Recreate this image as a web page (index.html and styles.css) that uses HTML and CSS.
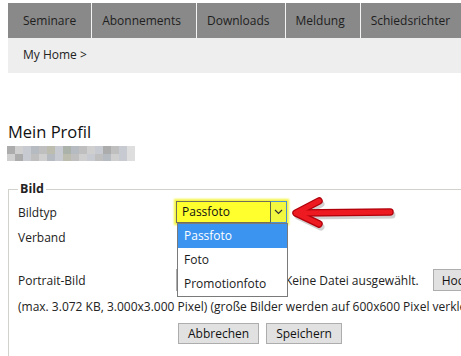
FILE: index.html
```html
<!DOCTYPE html>
<html>
<head>
	<title>Mein Profil</title>
	<link rel="stylesheet" href="styles.css">
</head>
<body>
	<div class="page">
		<nav class="tabs">
			<a class="tab first">Seminare</a>
			<a class="tab">Abonnements</a>
			<a class="tab">Downloads</a>
			<a class="tab">Meldung</a>
			<a class="tab">Schiedsrichter</a>
		</nav>
		<div class="crumbs">My Home &gt;</div>

		<div class="content">
			<h1>Mein Profil</h1>
			<div class="blur">
				<span class="s1"></span><span class="s3"></span><span class="s4"></span><span class="s5"></span><span class="s2"></span><span class="s6"></span><span class="s4"></span><span class="s7"></span><span class="s5"></span><span class="s2"></span><span class="s3"></span><span class="s4"></span><span class="s1"></span><span class="s2"></span><span class="s4"></span><span class="s0"></span>
				<span class="s3"></span><span class="s1"></span><span class="s4"></span><span class="s2"></span><span class="s3"></span><span class="s5"></span><span class="s4"></span><span class="s6"></span><span class="s2"></span><span class="s3"></span><span class="s4"></span><span class="s2"></span><span class="s5"></span><span class="s3"></span><span class="s4"></span><span class="s0"></span>
			</div>

			<fieldset class="box">
				<legend>Bild</legend>
				<div class="row">
					<label class="lbl">Bildtyp</label>
					<div class="select-wrap">
						<div class="select">
							<span class="value">Passfoto</span>
							<span class="caret">
								<svg width="9" height="6" viewBox="0 0 9 6"><path d="M1 1 L4.5 4.5 L8 1" fill="none" stroke="#333" stroke-width="1.2"/></svg>
							</span>
						</div>
						<ul class="options">
							<li class="active">Passfoto</li>
							<li>Foto</li>
							<li>Promotionfoto</li>
						</ul>
					</div>
				</div>
				<div class="row">
					<label class="lbl">Verband</label>
				</div>
				<div class="row file-row">
					<label class="lbl">Portrait-Bild</label>
					<div class="file">
						<button class="btn browse">Durchsuchen...</button>
						<span class="nofile">Keine Datei ausgewählt.</span>
						<button class="btn">Hochladen</button>
					</div>
				</div>
				<p class="hint">(max. 3.072 KB, 3.000x3.000 Pixel) (große Bilder werden auf 600x600 Pixel verkleinert)</p>
				<div class="actions">
					<button class="btn">Abbrechen</button>
					<button class="btn">Speichern</button>
				</div>
			</fieldset>
		</div>

		<svg class="arrow" width="110" height="36" viewBox="0 0 110 36">
			<g fill="none" stroke-linecap="round" stroke-linejoin="round">
				<g stroke="#9a9a9a" stroke-width="7" opacity="0.45" transform="translate(2,3)">
					<path d="M31 5 L8 17 L31 28"/>
					<path d="M10 17 L102 16"/>
				</g>
				<g stroke="#b0000a" stroke-width="7.5">
					<path d="M31 5 L8 17 L31 28"/>
					<path d="M10 17 L102 16"/>
				</g>
				<g stroke="#ee1a22" stroke-width="5">
					<path d="M31 5 L8 17 L31 28"/>
					<path d="M10 17 L102 16"/>
				</g>
			</g>
		</svg>
	</div>
</body>
</html>
```

FILE: styles.css
```css
html, body {
	margin: 0;
	padding: 0;
	background-color: #fff;
	overflow: hidden;
}

body {
	font-family: "Open Sans", "Noto Sans", Arial, sans-serif;
	font-size: 12px;
	color: #222;
}

.page {
	position: relative;
	width: 640px;
	padding: 3px 0 0 8px;
}

.tabs {
	display: flex;
	height: 35px;
	background-color: #898989;
}

.tab {
	display: flex;
	align-items: center;
	padding: 0 15px 0 10px;
	border-right: 1px solid #f4f4f4;
	color: #1e1e1e;
	white-space: nowrap;
}

.tab.first {
	padding-left: 15px;
}

.crumbs {
	height: 35px;
	line-height: 33px;
	padding-left: 15px;
	background-color: #eeeeee;
	color: #222;
}

.content {
	padding-top: 47px;
}

h1 {
	margin: 0;
	font-size: 16.5px;
	font-weight: normal;
	line-height: 24px;
	color: #111;
}

.blur {
	display: grid;
	grid-template-columns: repeat(16, 8px);
	grid-auto-rows: 7.5px;
	margin: 2px 0 0 -1px;
	width: 128px;
}

.s0 { background: #dedede; }
.s1 { background: #acacac; }
.s2 { background: #bfbfbf; }
.s3 { background: #cfcfcf; }
.s4 { background: #c7cbd1; }
.s5 { background: #b6bac1; }
.s6 { background: #bcbdaf; }
.s7 { background: #aab2a9; }

.box {
	margin: 19px 0 0 0;
	padding: 0 9px 20px 9px;
	border: 1px solid #d2d2cc;
	border-right: none;
	border-bottom: none;
}

.box legend {
	padding: 0 2px;
	margin-left: 0;
	font-weight: bold;
	font-size: 12.5px;
	line-height: 18px;
}

.row {
	display: flex;
	align-items: center;
	height: 22px;
	margin-top: 3px;
}

.lbl {
	width: 158px;
	flex: none;
}

.select-wrap {
	position: relative;
}

.select {
	display: flex;
	align-items: stretch;
	width: 109px;
	height: 20px;
	border: 1px solid #6f6f5a;
	background-color: #ffff2e;
	box-shadow: 0 0 2px 2px #f5f53a;
}

.value {
	flex: 1;
	padding-left: 5px;
	line-height: 20px;
	color: #111;
}

.caret {
	display: flex;
	align-items: center;
	justify-content: center;
	width: 15px;
	border: 1px solid #4c8fd0;
	border-left-color: #5c6a4a;
	margin: -1px -1px -1px 0;
	background-color: #f2f740;
}

.options {
	position: absolute;
	top: 22px;
	left: 1px;
	width: 109px;
	margin: 0;
	padding: 0;
	list-style: none;
	background-color: #fff;
	border: 1px solid #7a7a7a;
	z-index: 2;
}

.options li {
	height: 24px;
	line-height: 23px;
	padding-left: 6px;
	color: #1a1a1a;
}

.options li.active {
	background-color: #3b94f0;
	color: #fff;
}

.file-row {
	margin-top: 21px;
}

.file {
	display: flex;
	align-items: center;
	white-space: nowrap;
}

.nofile {
	margin: 0 14px 0 8px;
}

.btn {
	height: 22px;
	padding: 0 8px;
	border: 1px solid #adadad;
	background-color: #e1e1e1;
	font-family: inherit;
	font-size: 12px;
	color: #111;
}

.browse {
	width: 101px;
}

.hint {
	margin: 7px 0 0 0;
	line-height: 18px;
	white-space: nowrap;
}

.actions {
	display: flex;
	gap: 7px;
	margin: 7px 0 0 160px;
}

.actions .btn {
	height: 21px;
	padding: 0 9px;
}

.arrow {
	position: absolute;
	top: 196px;
	left: 288px;
	z-index: 3;
}
```
